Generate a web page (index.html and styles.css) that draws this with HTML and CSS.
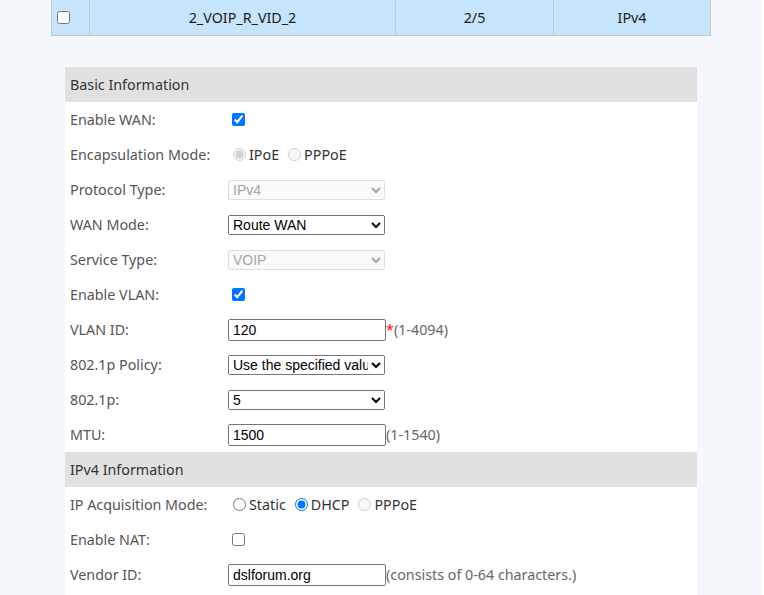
FILE: index.html
```html
<!DOCTYPE html>
<html>
<head>
<meta charset="utf-8">
<link rel="stylesheet" href="styles.css">
</head>
<body>
<div class="page">
  <nav class="side">
    <div class="side-item first"></div>
    <div class="side-item"></div>
    <div class="side-item"></div>
    <div class="side-item"></div>
    <div class="side-item"></div>
    <div class="side-item"></div>
  </nav>
  <main class="main">
    <div class="list-row">
      <div class="cell c-check"><input type="checkbox"></div>
      <div class="cell c-name">2_VOIP_R_VID_2</div>
      <div class="cell c-vid">2/5</div>
      <div class="cell c-proto">IPv4</div>
    </div>

    <section class="panel">
      <div class="sec-head">Basic Information</div>
      <div class="row"><span class="lbl">Enable WAN:</span><div class="ctl"><input type="checkbox" checked></div></div>
      <div class="row"><span class="lbl">Encapsulation Mode:</span><div class="ctl"><input type="radio" name="enc" checked disabled><span class="opt">IPoE</span><input class="next" type="radio" name="enc" disabled><span class="opt">PPPoE</span></div></div>
      <div class="row"><span class="lbl">Protocol Type:</span><div class="ctl"><select class="sel" disabled><option>IPv4</option></select></div></div>
      <div class="row"><span class="lbl">WAN Mode:</span><div class="ctl"><select class="sel"><option>Route WAN</option></select></div></div>
      <div class="row"><span class="lbl">Service Type:</span><div class="ctl"><select class="sel" disabled><option>VOIP</option></select></div></div>
      <div class="row"><span class="lbl">Enable VLAN:</span><div class="ctl"><input type="checkbox" checked></div></div>
      <div class="row"><span class="lbl">VLAN ID:</span><div class="ctl"><input class="txt" type="text" value="120"><span class="req">*</span><span class="hint">(1-4094)</span></div></div>
      <div class="row"><span class="lbl">802.1p Policy:</span><div class="ctl"><select class="sel"><option>Use the specified value</option></select></div></div>
      <div class="row"><span class="lbl">802.1p:</span><div class="ctl"><select class="sel"><option>5</option></select></div></div>
      <div class="row"><span class="lbl">MTU:</span><div class="ctl"><input class="txt" type="text" value="1500"><span class="hint">(1-1540)</span></div></div>

      <div class="sec-head">IPv4 Information</div>
      <div class="row"><span class="lbl">IP Acquisition Mode:</span><div class="ctl"><input type="radio" name="ipm"><span class="opt">Static</span><input class="next" type="radio" name="ipm" checked><span class="opt">DHCP</span><input class="next" type="radio" name="ipm2" disabled><span class="opt">PPPoE</span></div></div>
      <div class="row"><span class="lbl">Enable NAT:</span><div class="ctl"><input type="checkbox"></div></div>
      <div class="row"><span class="lbl">Vendor ID:</span><div class="ctl"><input class="txt" type="text" value="dslforum.org"><span class="hint">(consists of 0-64 characters.)</span></div></div>
      <div class="row"><span class="lbl"></span><div class="ctl"></div></div>
    </section>
  </main>
  <div class="rail"></div>
</div>
</body>
</html>
```

FILE: styles.css
```css
html, body {
  margin: 0;
  padding: 0;
  height: 100%;
  overflow: hidden;
}

body {
  font-family: "Noto Sans", "Open Sans", sans-serif;
  font-size: 14.3px;
  color: #333;
  background: #f4f7fc;
}

.page {
  display: flex;
  height: 595px;
  overflow: hidden;
}

.side {
  width: 1px;
  flex: none;
  background: #fafbfd;
  display: flex;
  flex-direction: column;
}

.side-item {
  height: 50px;
  border-bottom: 1px solid #e2e4e8;
  flex: none;
}

.side-item.first {
  height: 24px;
}

.main {
  flex: 1;
  min-width: 0;
  background: #f4f7fc;
}

.rail {
  width: 3px;
  flex: none;
  background: #fff;
}

/* list row (scrolled, top cut) */
.list-row {
  margin-left: 50px;
  width: 660px;
  height: 36px;
  box-sizing: border-box;
  display: flex;
  background: #c6e4fc;
  border-left: 1px solid #c4c8cc;
  border-right: 1px solid #c4c8cc;
  border-bottom: 1px solid #c4c8cc;
  color: #1a1a1a;
}

.cell {
  display: flex;
  align-items: center;
  justify-content: center;
  border-right: 1px solid #c4c8cc;
  box-sizing: border-box;
}

.cell:last-child {
  border-right: none;
}

.c-check {
  width: 38px;
  justify-content: flex-start;
  padding-left: 1px;
}

.c-check input {
  margin: 0 0 0 4px;
  width: 13px;
  height: 13px;
}

.c-name {
  width: 306px;
}

.c-vid {
  width: 158px;
}

.c-proto {
  flex: 1;
}

/* panel */
.panel {
  margin: 31px 0 0 64px;
  width: 632px;
  background: #fff;
  min-height: 600px;
}

.sec-head {
  height: 35px;
  display: flex;
  align-items: center;
  padding-left: 5px;
  background: #e1e1e1;
  color: #333;
}

.row {
  height: 35px;
  display: grid;
  grid-template-columns: 163px 1fr;
  align-items: center;
}

.lbl {
  padding-left: 5px;
  color: #555;
}

.ctl {
  display: flex;
  align-items: center;
  color: #333;
  white-space: pre;
}

.ctl input[type="checkbox"] {
  margin: 0 3px 0 4px;
  width: 13px;
  height: 13px;
}

.ctl input[type="radio"] {
  margin: 0 3px 0 5px;
  width: 13px;
  height: 13px;
}

.ctl input[type="radio"].next {
  margin-left: 9px;
}

.opt {
  color: #333;
}

.sel {
  width: 157px;
  height: 20px;
  margin: 0;
  font-family: "Liberation Sans", Arial, sans-serif;
  font-size: 14px;
}

.txt {
  width: 158px;
  height: 22px;
  box-sizing: border-box;
  margin: 0;
  padding: 1px 4px;
  border: 1px solid #767676;
  border-radius: 2px;
  font-family: "Liberation Sans", Arial, sans-serif;
  font-size: 14px;
  color: #000;
}

.req {
  color: #f00;
}

.hint {
  color: #666;
}
```
